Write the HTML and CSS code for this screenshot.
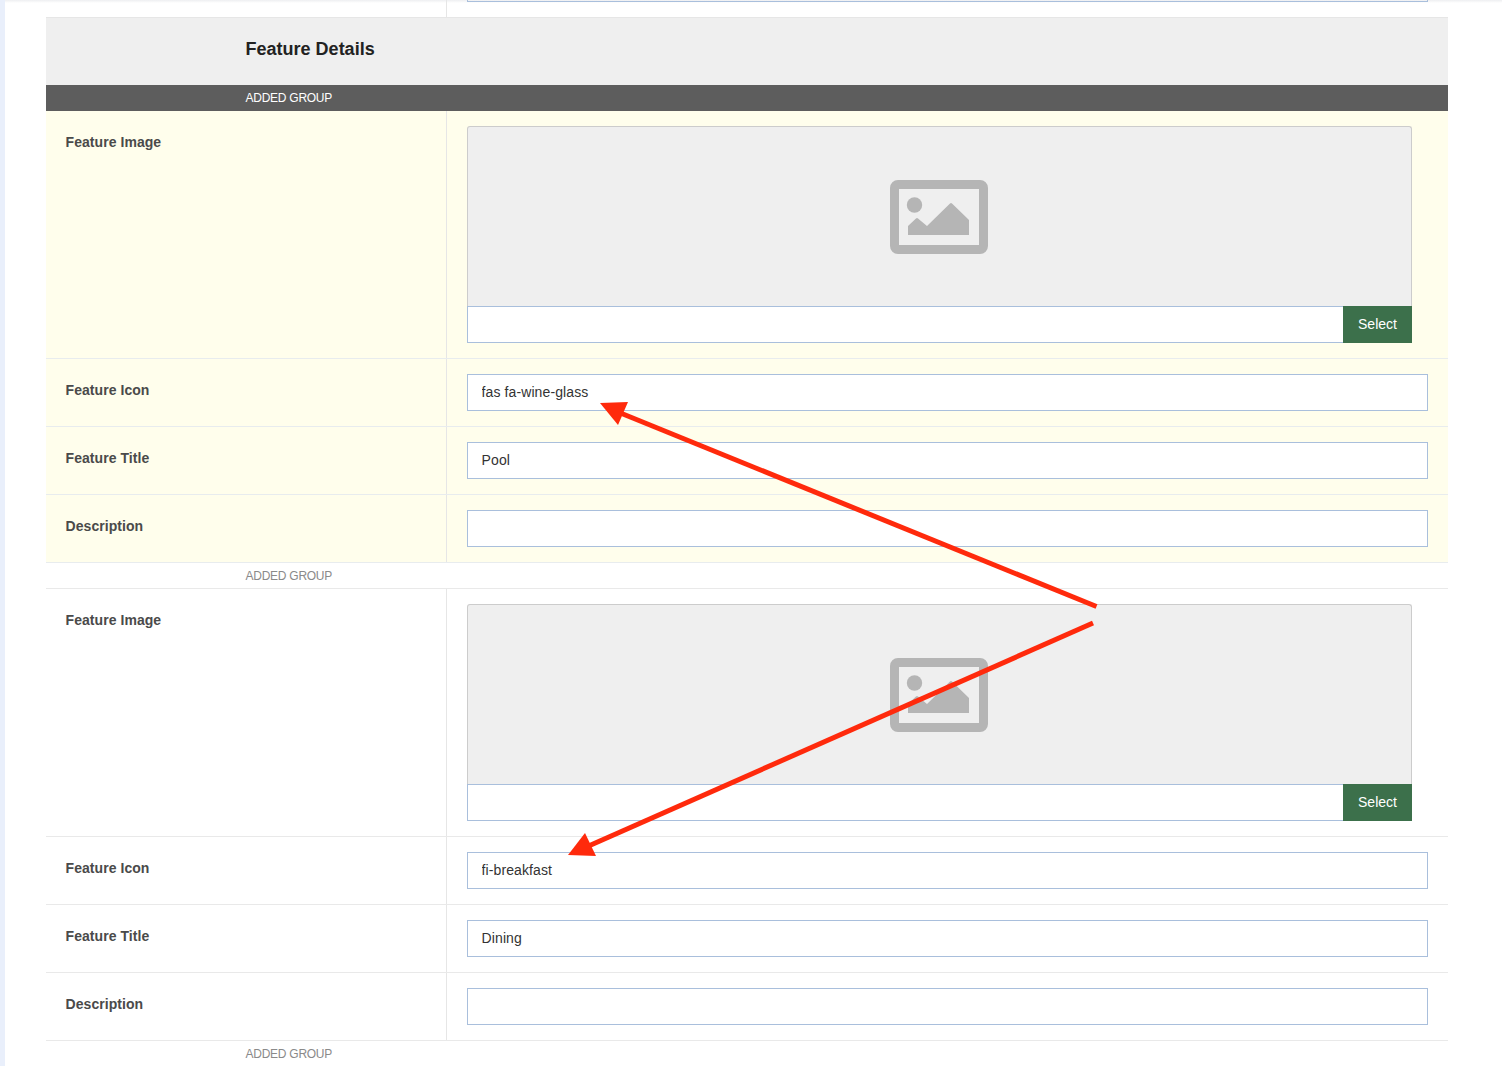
FILE: index.html
```html
<!DOCTYPE html>
<html lang="en">
<head>
<meta charset="utf-8">
<title>Feature Details</title>
<link rel="stylesheet" href="styles.css">
</head>
<body>
<main class="page">
  <div class="panel">
    <div class="row row-stub">
      <div class="label-cell"></div>
      <div class="field-cell"><div class="stub-input"></div></div>
    </div>
    <h2 class="section-title">Feature Details</h2>
    <div class="group-head group-head-active">ADDED GROUP</div>
    <section class="group group-active">
      <div class="row">
        <div class="label-cell"><label class="label">Feature Image</label></div>
        <div class="field-cell">
          <div class="media">
            <div class="preview">
              <svg class="preview-icon" viewBox="0 0 98 74" aria-hidden="true"><path fill-rule="evenodd" d="M8 0H90A8 8 0 0 1 98 8V66A8 8 0 0 1 90 74H8A8 8 0 0 1 0 66V8A8 8 0 0 1 8 0ZM9 9V65H89V9Z"/><circle cx="24.500" cy="25" r="7.700"/><path d="M18 55V46L26 38.500Q27 37.500 28 38.500L37 46L60 23.500Q61 22.500 62 23.500L79 40V55Z"/></svg>
            </div>
            <div class="media-bar"><input class="input media-input" type="text" value=""><button class="select-btn" type="button">Select</button></div>
          </div>
        </div>
      </div>
      <div class="row">
        <div class="label-cell"><label class="label">Feature Icon</label></div>
        <div class="field-cell"><input class="input" type="text" value="fas fa-wine-glass"></div>
      </div>
      <div class="row">
        <div class="label-cell"><label class="label">Feature Title</label></div>
        <div class="field-cell"><input class="input" type="text" value="Pool"></div>
      </div>
      <div class="row">
        <div class="label-cell"><label class="label">Description</label></div>
        <div class="field-cell"><input class="input" type="text" value=""></div>
      </div>
    </section>
    <div class="group-head">ADDED GROUP</div>
    <section class="group">
      <div class="row">
        <div class="label-cell"><label class="label">Feature Image</label></div>
        <div class="field-cell">
          <div class="media">
            <div class="preview">
              <svg class="preview-icon" viewBox="0 0 98 74" aria-hidden="true"><path fill-rule="evenodd" d="M8 0H90A8 8 0 0 1 98 8V66A8 8 0 0 1 90 74H8A8 8 0 0 1 0 66V8A8 8 0 0 1 8 0ZM9 9V65H89V9Z"/><circle cx="24.500" cy="25" r="7.700"/><path d="M18 55V46L26 38.500Q27 37.500 28 38.500L37 46L60 23.500Q61 22.500 62 23.500L79 40V55Z"/></svg>
            </div>
            <div class="media-bar"><input class="input media-input" type="text" value=""><button class="select-btn" type="button">Select</button></div>
          </div>
        </div>
      </div>
      <div class="row">
        <div class="label-cell"><label class="label">Feature Icon</label></div>
        <div class="field-cell"><input class="input" type="text" value="fi-breakfast"></div>
      </div>
      <div class="row">
        <div class="label-cell"><label class="label">Feature Title</label></div>
        <div class="field-cell"><input class="input" type="text" value="Dining"></div>
      </div>
      <div class="row">
        <div class="label-cell"><label class="label">Description</label></div>
        <div class="field-cell"><input class="input" type="text" value=""></div>
      </div>
    </section>
    <div class="group-head">ADDED GROUP</div>
  </div>
  <svg class="annotations" viewBox="0 0 1502 1066" aria-hidden="true">
    <line class="arrow-line" x1="1096.500" y1="606.500" x2="618" y2="412"/>
    <polygon class="arrow-head" points="600,403 628,402 618,425"/>
    <line class="arrow-line" x1="1093" y1="623" x2="584" y2="848"/>
    <polygon class="arrow-head" points="568,855 585,833 596,856"/>
  </svg>
</main>
</body>
</html>
```
FILE: styles.css
```css
* {
  box-sizing: border-box;
}

html,
body {
  margin: 0;
  height: 100%;
  overflow: hidden;
  background: #fff;
}

body {
  font-family: "Liberation Sans", Arial, sans-serif;
  color: #333;
}

.page {
  position: relative;
  height: 1066px;
  overflow: hidden;
  padding: 0 54px 0 46px;
  background: linear-gradient(to right, #e9effb 0, #e9effb 5px, #fff 5px);
}

.page::before {
  content: "";
  position: absolute;
  top: 0;
  left: 5px;
  right: 0;
  height: 3px;
  background: linear-gradient(to bottom, #eeeff1, #fff);
}

.panel {
  position: relative;
  width: 1402px;
}

.row {
  display: grid;
  grid-template-columns: 401px 1fr;
  border-bottom: 1px solid #e9e9e9;
}

.group-active .row {
  border-bottom-color: #e8ecee;
}

.row-stub {
  height: 17px;
  border-bottom: 0;
}

.label-cell {
  padding: 21px 20px 0 19.600px;
  border-right: 1px solid #e6e6e6;
}

.row-stub .label-cell {
  padding: 0;
}

.field-cell {
  padding: 15px 20px;
}

.row-stub .field-cell {
  padding: 0 20px;
}

.stub-input {
  height: 2px;
  border: 1px solid #a9bfdc;
  border-top: 0;
}

.label {
  display: block;
  font-size: 14px;
  line-height: 20px;
  font-weight: 700;
  letter-spacing: 0.05px;
  color: #4a4a4a;
}

.section-title {
  margin: 0;
  height: 68px;
  padding: 20px 0 0 199.600px;
  font-size: 18px;
  line-height: 22px;
  font-weight: 700;
  color: #222;
  background: #efefef;
  border-top: 1px solid #e6e6e6;
}

.group-head {
  height: 26px;
  padding-left: 199.600px;
  font-size: 12px;
  line-height: 26px;
  letter-spacing: -0.27px;
  color: #8a8a8a;
  border-bottom: 1px solid #e9e9e9;
}

.group-head-active {
  color: #fff;
  background: #5d5d5d;
  border-bottom: 0;
}

.group-active {
  background: #fffeec;
}

.input {
  display: block;
  width: 100%;
  height: 37px;
  padding: 0 14px 2px 13.600px;
  font-family: inherit;
  font-size: 14px;
  letter-spacing: 0.1px;
  color: #333;
  background: #fff;
  border: 1px solid #a9bfdc;
  border-radius: 0;
  outline: 0;
}

.media {
  width: 945px;
}

.preview {
  display: flex;
  align-items: center;
  justify-content: center;
  height: 180px;
  padding-right: 1px;
  background: #efefef;
  border: 1px solid #ccc;
  border-bottom: 0;
  border-radius: 3px 3px 0 0;
}

.preview-icon {
  width: 98px;
  height: 74px;
  fill: #b5b5b5;
}

.media-bar {
  display: flex;
}

.media-input {
  flex: 1;
  min-width: 0;
  width: auto;
  border-right: 0;
}

.select-btn {
  width: 69px;
  height: 37px;
  padding: 0 0 2px;
  font-family: inherit;
  font-size: 14px;
  color: #fff;
  background: #3c704b;
  border: 0;
  border-radius: 0;
}

.annotations {
  position: absolute;
  top: 0;
  left: 0;
  width: 1502px;
  height: 1066px;
  pointer-events: none;
}

.arrow-line {
  stroke: #ff2a0c;
  stroke-width: 5;
}

.arrow-head {
  fill: #ff2a0c;
}
```
